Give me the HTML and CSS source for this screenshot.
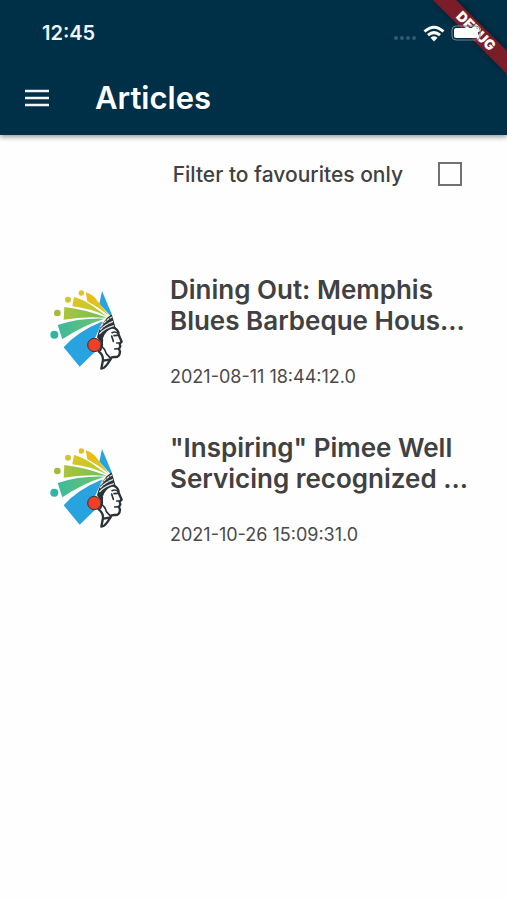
FILE: index.html
```html
<!DOCTYPE html>
<html lang="en">
<head>
<meta charset="utf-8">
<meta name="viewport" content="width=device-width, initial-scale=1">
<title>Articles</title>
<link rel="stylesheet" href="styles.css">
</head>
<body>
<svg class="defs" aria-hidden="true">
  <defs>
    <linearGradient id="g1" x1="0" y1="0" x2="1" y2="1"><stop offset="0" stop-color="#f5b80c"/><stop offset="1" stop-color="#c9cf3c"/></linearGradient>
    <linearGradient id="g2" x1="0" y1="0" x2="1" y2="1"><stop offset="0" stop-color="#e3c51c"/><stop offset="1" stop-color="#a5cb40"/></linearGradient>
    <linearGradient id="g3" x1="0" y1="0" x2="1" y2="0"><stop offset="0" stop-color="#acc43a"/><stop offset="1" stop-color="#6cc05c"/></linearGradient>
    <linearGradient id="g4" x1="0" y1="0" x2="1" y2="0"><stop offset="0" stop-color="#3dba9c"/><stop offset="1" stop-color="#6fc368"/></linearGradient>
    <symbol id="chief" viewBox="30 26 222 246">
      <path fill="#29a3df" d="M186 32 L178 70 L211 106 L215 101 Z"/>
      <path fill="url(#g1)" d="M137 36 Q158 42 172 61 L208 107 Q177 82 142 63 Z"/>
      <path fill="url(#g2)" d="M102 50 Q131 58 158 77 L204 110 Q154 84 97 78 Z"/>
      <path fill="url(#g3)" d="M73 80 Q130 86 200 112 Q130 107 71 118 Z"/>
      <path fill="url(#g4)" d="M53 134 Q120 112 194 115 Q126 136 67 177 Z"/>
      <path fill="#29a3df" d="M71 201 Q112 154 188 123 L178 145 L163 178 L173 207 L119 259 Z"/>
      <circle cx="124" cy="38" r="8" fill="#e8bd1c"/>
      <circle cx="84" cy="58" r="9" fill="#d5c52c"/>
      <circle cx="52" cy="98" r="10" fill="#a9b83b"/>
      <circle cx="43" cy="163" r="12" fill="#2eb5a4"/>
      <path fill="#fff" d="M214 104 L219 128 L234 150 L247 185 L240 190 L241 205 L238 227 L216 231 L207 245 L182 268 L190 239 L176 214 L168 176 L174 158 Z"/>
      <path fill="#2c3338" d="M215 102 L220 118 L228 147 L216 145 Q196 150 188 176 L186 192 L171 171 Q175 148 187 130 Q198 112 215 102 Z"/>
      <g fill="none" stroke="#dfe3e4" stroke-width="4">
        <path d="M183 138 Q197 119 216 110"/>
        <path d="M180 149 Q195 132 219 123"/>
        <path d="M178 161 Q193 144 222 136"/>
      </g>
      <path d="M189 127 L194 133 M198 119 L203 125 M207 112 L211 118 M188 139 L193 145 M203 129 L208 135" fill="none" stroke="#2c3338" stroke-width="2"/>
      <g fill="none" stroke="#2c3338" stroke-width="7" stroke-linejoin="round" stroke-linecap="round">
        <path d="M225 144 Q236 151 236 163 L245 184 L239 190 L241 198 L237 206 L240 214 Q239 231 224 230 L214 231"/>
        <path d="M176 213 Q190 224 189 239 L184 265 Q193 264 201 253 L213 235"/>
        <path d="M187 177 L186 199 Q197 208 199 220 L210 232" stroke-width="5"/>
        <path d="M216 157 Q226 152 234 159 M222 166 L232 165" stroke-width="5"/>
        <path d="M215 167 L220 183 M230 188 L239 188 M224 206 L237 205" stroke-width="5"/>
        <path d="M186 193 L181 209 M190 241 Q200 240 208 238"/>
      </g>
      <circle cx="163" cy="194" r="20" fill="#ee4026" stroke="#353034" stroke-width="3"/>
    </symbol>
  </defs>
</svg>

<header class="top">
  <div class="status">
    <span class="time">12:45</span>
    <svg class="dots" viewBox="0 0 24 6" aria-hidden="true"><g fill="#355a6e"><circle cx="3" cy="3" r="2"/><circle cx="9" cy="3" r="2"/><circle cx="15" cy="3" r="2"/><circle cx="21" cy="3" r="2"/></g></svg>
    <svg class="wifi" viewBox="0 0 22 17" aria-hidden="true"><g fill="none" stroke="#fff" stroke-width="3"><path d="M1.500 6.500 Q11 -2 20.500 6.500"/><path d="M5 10.200 Q11 5 17 10.200"/></g><path fill="#fff" d="M7.500 12.700 Q11 10 14.500 12.700 L11 16.500 Z"/></svg>
    <svg class="battery" viewBox="0 0 32 16" aria-hidden="true"><rect x="1" y="1" width="28" height="14" rx="4" fill="none" stroke="#6d8793"/><rect x="3" y="3" width="24" height="10" rx="2" fill="#fff"/></svg>
  </div>
  <div class="bar">
    <button class="menu" type="button" aria-label="Open menu">
      <svg viewBox="0 0 24 18" aria-hidden="true"><path d="M0 2H24M0 9H24M0 16H24" stroke="#f4f7f8" stroke-width="2.700"/></svg>
    </button>
    <h1>Articles</h1>
  </div>
  <svg class="ribbon" viewBox="0 0 80 80" aria-hidden="true">
    <path class="ribbon-band" d="M6 0H29L80 51V74Z"/>
    <text x="0" y="5" transform="translate(49 31) rotate(45)" text-anchor="middle">DEBUG</text>
  </svg>
</header>

<main>
  <label class="filter"><span>Filter to favourites only</span><input type="checkbox"></label>
  <article>
    <svg class="logo" role="img" aria-label="Logo"><use href="#chief"/></svg>
    <div class="copy">
      <h2>Dining Out: Memphis Blues Barbeque Hous...</h2>
      <time>2021-08-11 18:44:12.0</time>
    </div>
  </article>
  <article>
    <svg class="logo" role="img" aria-label="Logo"><use href="#chief"/></svg>
    <div class="copy">
      <h2>"Inspiring" Pimee Well Servicing recognized ...</h2>
      <time>2021-10-26 15:09:31.0</time>
    </div>
  </article>
</main>
</body>
</html>
```
FILE: styles.css
```css
* { box-sizing: border-box; }
body {
  margin: 0;
  background: #fefefe;
  color: #414141;
  font-family: Inter, "Liberation Sans", sans-serif;
}
h1, h2 { margin: 0; }
.defs { position: absolute; width: 0; height: 0; }

.top {
  position: relative;
  background: #003048;
  color: #fff;
  padding-bottom: 8px;
  box-shadow: 0 2px 5px rgba(0, 0, 0, 0.4);
}
.status {
  position: relative;
  z-index: 2;
  display: flex;
  align-items: center;
  height: 66px;
  padding: 0 24px 0 42px;
}
.time { flex: 1; font-size: 20px; font-weight: 600; color: #f1f5f7; }
.dots { width: 24px; height: 6px; margin: 10px 6px 0 0; }
.wifi { width: 22px; height: 17px; margin-right: 6px; }
.battery { width: 32px; height: 16px; }
.bar {
  display: flex;
  align-items: center;
  gap: 46px;
  height: 60px;
  padding: 2px 25px 0;
  margin-top: 1px;
}
.menu { display: flex; padding: 0; border: 0; background: none; }
.menu svg { width: 24px; height: 18px; }
h1 { font-size: 31px; line-height: 36px; font-weight: 600; }
.ribbon {
  position: absolute;
  top: 0;
  right: 0;
  width: 80px;
  height: 80px;
}
.ribbon-band { fill: #7b1d28; filter: drop-shadow(0 0 4px rgba(0, 0, 0, 0.4)); }
.ribbon text { fill: #fff; font-size: 14px; font-weight: 900; }

.filter {
  display: flex;
  align-items: center;
  justify-content: flex-end;
  gap: 35px;
  height: 78px;
  padding-right: 45px;
  font-size: 21px;
  font-weight: 500;
}
.filter input {
  appearance: none;
  width: 24px;
  height: 24px;
  margin: 0;
  border: 2px solid #717171;
}
article {
  display: flex;
  gap: 46px;
  padding: 0 38px 0 50px;
  margin-bottom: 38px;
}
.filter + article { margin-top: 61px; }
.logo { flex: none; width: 74px; height: 82px; margin-top: 15px; }
.copy { flex: 1; }
h2 { font-size: 26px; line-height: 31px; font-weight: 600; }
time {
  display: block;
  margin-top: 24px;
  font-size: 18px;
  line-height: 34px;
  color: #4a4a4a;
}
```
